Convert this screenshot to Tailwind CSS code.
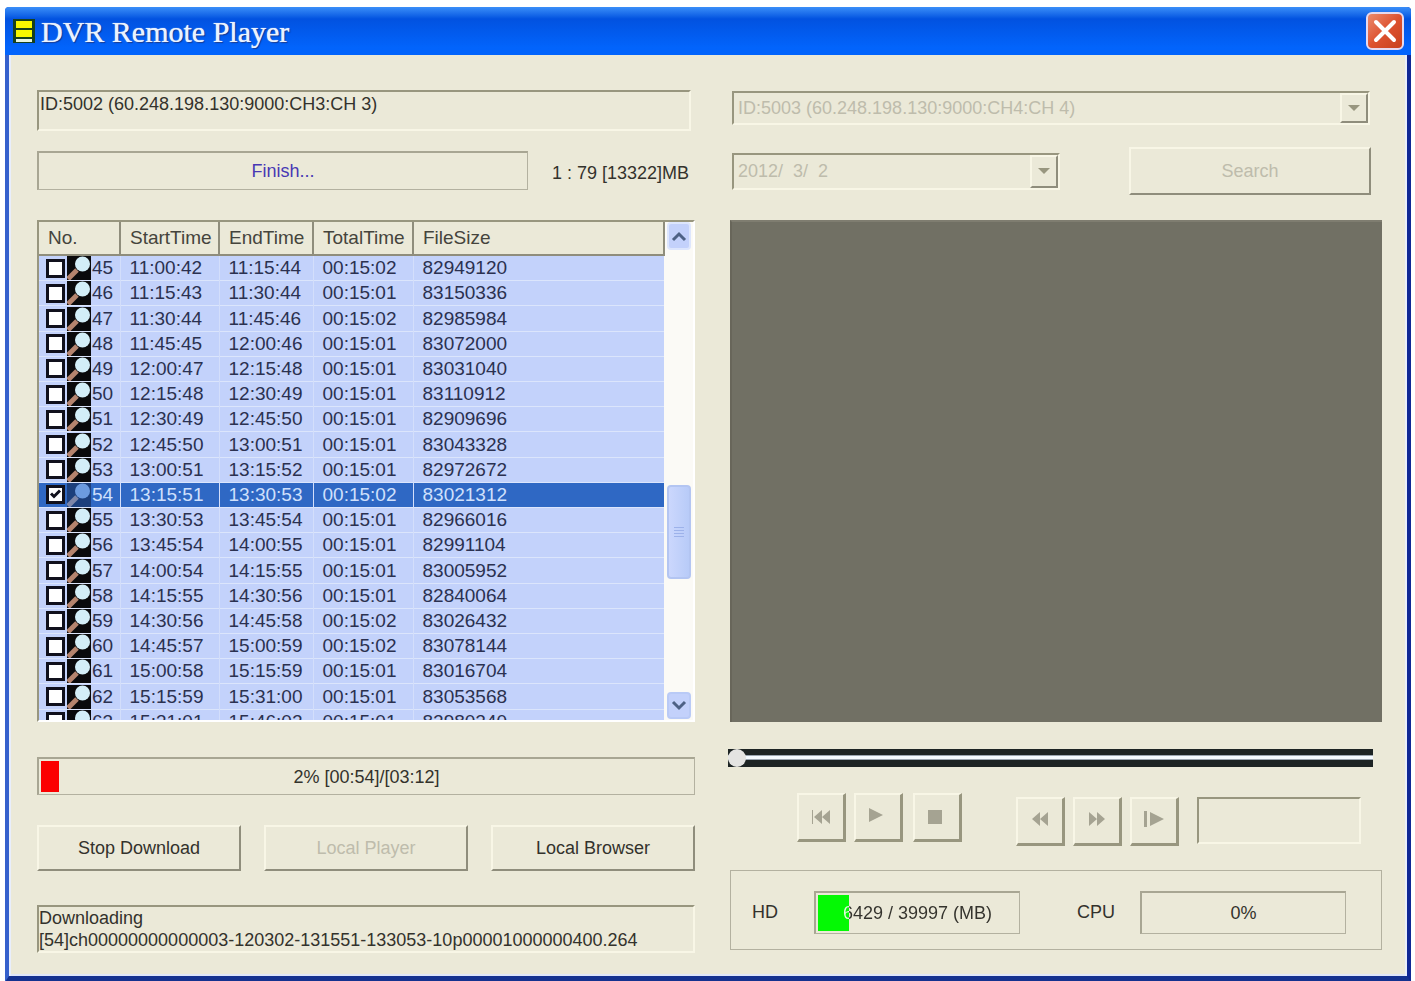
<!DOCTYPE html>
<html lang="en">
<head>
    <meta charset="UTF-8">
    <meta name="viewport" content="width=device-width, initial-scale=1.0">
    <title>DVR Remote Player</title>
    <script src="https://cdn.jsdelivr.net/npm/@tailwindcss/browser@4"></script>
</head>
<body class="min-h-screen bg-white pt-[7px] pl-[5px] pr-1 font-['Liberation_Sans',Arial,sans-serif] text-[18px] leading-[22px] text-[#33322c]">

    <div class="bg-[#ebe9d8] border-x-4 border-b-6 border-t-0 border-l-[#3560cc] border-r-[#0f2795] border-b-[#14318f] rounded-t-sm">
        <!-- Title bar -->
        <header class="-mx-1 h-12 pl-2 pr-[7px] flex items-center rounded-t-sm bg-linear-to-b from-[#3a8ef8] from-0% via-[#0252e0] via-25% to-[#0264fc] to-85%">
            <svg class="w-[22px] h-6 shrink-0" viewBox="0 0 22 24" aria-hidden="true">
                <rect width="22" height="24" fill="#16401c"/>
                <rect x="3" y="2" width="16" height="7" fill="#f8f800"/>
                <rect x="3" y="11" width="16" height="7" fill="#f8f800"/>
                <rect x="3" y="20" width="16" height="3" fill="#e8f4e0"/>
            </svg>
            <h1 class="ml-1.5 pt-0.5 flex-1 font-['Liberation_Serif',serif] text-[30px] leading-9 text-[#eaf3ff] [text-shadow:0_0_1px_#eaf3ff,1px_1px_1px_#0a2a80]">DVR Remote Player</h1>
            <button type="button" aria-label="Close" class="w-[38px] h-[38px] rounded-md border-2 border-[#e6d9ee] bg-linear-to-br from-[#ea8a6c] via-[#dd5230] to-[#c8401c] flex items-center justify-center">
                <svg class="w-6 h-6" viewBox="0 0 24 24" fill="none" stroke="#fff" stroke-width="4" stroke-linecap="round">
                    <path d="M3 3L21 21M21 3L3 21"/>
                </svg>
            </button>
        </header>

        <main class="pl-7 pr-[25px] pt-[35px] pb-[23px] grid grid-cols-[658fr_652fr] gap-[35px] shadow-[inset_2px_0_0_#e8eefc,inset_-2px_0_0_#e8eefc,inset_0_-2px_0_#dfe6fa]">

            <!-- Download side -->
            <section>
                <div class="h-[41px] mr-1 pl-px pt-px border-2 border-t-[#98967f] border-l-[#98967f] border-b-[#f8f6e6] border-r-[#f8f6e6]">ID:5002 (60.248.198.130:9000:CH3:CH 3)</div>

                <div class="mt-5 flex items-center">
                    <div class="h-[39px] w-[491px] border border-[#b3b1a0] border-t-2 border-l-2 border-t-[#a8a693] border-l-[#a8a693] flex items-center justify-center text-[#4838b4]">Finish...</div>
                    <div class="flex-1 pr-1.5 pt-1 text-right whitespace-nowrap">1 : 79 [13322]MB</div>
                </div>

                <!-- File list -->
                <div class="mt-[30px] h-[502px] flex overflow-hidden border-2 border-t-[#98967f] border-l-[#98967f] border-b-white border-r-white bg-[#fbfaf6]">
                    <div class="flex-1 h-full overflow-hidden">
                        <table class="w-full h-[513px] table-fixed border-collapse text-[19px] leading-[22px] text-[#2b3150]">
                            <thead>
                                <tr class="h-[33px] bg-[#ebe9d8] border-b-2 border-[#8f8d7c] text-[#45443c] text-left">
                                    <th class="w-[81px] py-0 pl-[9px] font-normal border-r-2 border-[#8f8d7c]">No.</th>
                                    <th class="w-[99px] py-0 pl-[9px] font-normal border-r-2 border-[#8f8d7c]">StartTime</th>
                                    <th class="w-[94px] py-0 pl-[9px] font-normal border-r-2 border-[#8f8d7c]">EndTime</th>
                                    <th class="w-[100px] py-0 pl-[9px] font-normal border-r-2 border-[#8f8d7c]">TotalTime</th>
                                    <th class="py-0 pl-[9px] font-normal border-r-2 border-[#8f8d7c]">FileSize</th>
                                </tr>
                            </thead>
                            <tbody id="files"></tbody>
                        </table>
                    </div>
                    <!-- Scrollbar -->
                    <div class="w-7 px-0.5 pb-px flex flex-col bg-[#fbfaf6]">
                        <button type="button" aria-label="Scroll up" class="h-[28px] rounded-sm border-2 border-[#dde6fd] bg-[#c3d1fb] flex items-center justify-center">
                            <svg class="w-4 h-3" viewBox="0 0 16 12" fill="none" stroke="#4d6185" stroke-width="3"><path d="M2 10L8 4L14 10"/></svg>
                        </button>
                        <div class="mt-[235px] h-[94px] rounded-sm border-2 border-[#b3c5f2] bg-linear-to-r from-[#cbd7fd] to-[#b8cbf8] flex items-center justify-center">
                            <svg class="w-2.5 h-3" viewBox="0 0 10 12" stroke="#9db2ea" stroke-width="1"><path d="M0 1.5H10M0 4.5H10M0 7.5H10M0 10.5H10"/></svg>
                        </div>
                        <button type="button" aria-label="Scroll down" class="mt-auto h-[27px] rounded-sm border-2 border-[#b9caf6] bg-[#c3d1fb] flex items-center justify-center">
                            <svg class="w-4 h-3" viewBox="0 0 16 12" fill="none" stroke="#4d6185" stroke-width="3"><path d="M2 2L8 8L14 2"/></svg>
                        </button>
                    </div>
                </div>

                <!-- Progress -->
                <div class="mt-[35px] h-[38px] relative border border-[#b3b1a0] border-t-2 border-l-2 border-t-[#a8a693] border-l-[#a8a693] flex items-center justify-center">
                    <div class="absolute left-0.5 inset-y-0.5 bg-[#fb0000]" style="width: 18px"></div>
                    <span>2% [00:54]/[03:12]</span>
                </div>

                <div class="mt-[30px] flex justify-between">
                    <button type="button" class="w-[204px] h-[46px] border-2 border-t-[#f8f6e6] border-l-[#f8f6e6] border-b-[#8f8d7c] border-r-[#8f8d7c]">Stop Download</button>
                    <button type="button" disabled class="w-[204px] h-[46px] border-2 border-t-[#f8f6e6] border-l-[#f8f6e6] border-b-[#8f8d7c] border-r-[#8f8d7c] text-[#bebcac]">Local Player</button>
                    <button type="button" class="w-[204px] h-[46px] border-2 border-t-[#f8f6e6] border-l-[#f8f6e6] border-b-[#8f8d7c] border-r-[#8f8d7c]">Local Browser</button>
                </div>

                <div class="mt-[34px] h-[48px] whitespace-nowrap border-2 border-t-[#98967f] border-l-[#98967f] border-b-[#f8f6e6] border-r-[#f8f6e6]">Downloading<br>[54]ch00000000000003-120302-131551-133053-10p00001000000400.264</div>
            </section>

            <!-- Playback side -->
            <section>
                <div class="mt-px ml-0.5 mr-3 h-[34px] relative border-2 border-t-[#98967f] border-l-[#98967f] border-b-[#f8f6e6] border-r-[#f8f6e6]">
                    <select disabled aria-label="Channel" class="block w-full h-full appearance-none pl-1 opacity-100 text-[#bebcac]">
                        <option>ID:5003 (60.248.198.130:9000:CH4:CH 4)</option>
                    </select>
                    <span class="absolute right-0 inset-y-0 w-7 border-2 border-t-[#f8f6e6] border-l-[#f8f6e6] border-b-[#8f8d7c] border-r-[#8f8d7c] bg-[#ebe9d8] flex items-center justify-center pointer-events-none">
                        <svg class="w-3 h-1.5" viewBox="0 0 12 6" fill="#98967f"><path d="M0 0H12L6 6Z"/></svg>
                    </span>
                </div>

                <div class="mt-[22px] ml-0.5 mr-[11px] flex items-center justify-between">
                    <div class="w-[328px] h-[37px] relative border-2 border-t-[#98967f] border-l-[#98967f] border-b-[#f8f6e6] border-r-[#f8f6e6]">
                        <select disabled aria-label="Date" class="block w-full h-full appearance-none pl-1 opacity-100 text-[#bebcac]">
                            <option>2012/&nbsp; 3/&nbsp; 2</option>
                        </select>
                        <span class="absolute right-0 inset-y-0 w-7 border-2 border-t-[#f8f6e6] border-l-[#f8f6e6] border-b-[#8f8d7c] border-r-[#8f8d7c] bg-[#ebe9d8] flex items-center justify-center pointer-events-none">
                            <svg class="w-3 h-1.5" viewBox="0 0 12 6" fill="#98967f"><path d="M0 0H12L6 6Z"/></svg>
                        </span>
                    </div>
                    <button type="button" disabled class="w-[242px] h-12 border-2 border-t-[#f8f6e6] border-l-[#f8f6e6] border-b-[#8f8d7c] border-r-[#8f8d7c] text-[#bebcac]">Search</button>
                </div>

                <!-- Video -->
                <div class="mt-[25px] h-[502px] bg-[#717064] border-t-2 border-l-2 border-t-[#7f7d70] border-l-[#68665a]"></div>

                <div class="mt-[27px] -ml-0.5 mr-[9px]">
                    <input type="range" min="0" max="100" value="0" aria-label="Position" class="block w-full h-[18px] appearance-none bg-[linear-gradient(#1d2424_6px,#9aa5b0_6px,#9aa5b0_7px,#f4faff_7px,#f4faff_10px,#9aa5b0_10px,#9aa5b0_11px,#1d2424_11px)] [&::-webkit-slider-thumb]:appearance-none [&::-webkit-slider-thumb]:w-[18px] [&::-webkit-slider-thumb]:h-[18px] [&::-webkit-slider-thumb]:rounded-full [&::-webkit-slider-thumb]:bg-[#e4e4e2]">
                </div>

                <!-- Player controls -->
                <div class="mt-[26px] ml-[67px] mr-[21px] flex text-[#a5a392]">
                    <div class="flex gap-2">
                        <button type="button" disabled aria-label="Previous" class="w-[49px] h-[49px] border-2 border-b-3 border-r-3 border-t-[#f8f6e6] border-l-[#f8f6e6] border-b-[#98967f] border-r-[#98967f] flex items-center justify-center">
                            <svg class="w-[18px] h-[14px]" viewBox="0 0 18 14" fill="currentColor"><path d="M0 0H1V14H0ZM10 0V14L2 7ZM18 0V14L10 7Z"/></svg>
                        </button>
                        <button type="button" disabled aria-label="Play" class="w-[49px] h-[49px] pb-1 pr-1 border-2 border-b-3 border-r-3 border-t-[#f8f6e6] border-l-[#f8f6e6] border-b-[#98967f] border-r-[#98967f] flex items-center justify-center">
                            <svg class="w-[14px] h-[14px]" viewBox="0 0 14 14" fill="currentColor"><path d="M0 0L14 7L0 14Z"/></svg>
                        </button>
                        <button type="button" disabled aria-label="Stop" class="ml-0.5 w-[49px] h-[49px] pr-1 border-2 border-b-3 border-r-3 border-t-[#f8f6e6] border-l-[#f8f6e6] border-b-[#98967f] border-r-[#98967f] flex items-center justify-center">
                            <svg class="w-[14px] h-[14px]" viewBox="0 0 14 14" fill="currentColor"><path d="M0 0H14V14H0Z"/></svg>
                        </button>
                    </div>
                    <div class="ml-[54px] mt-1 flex flex-1 gap-2">
                        <button type="button" disabled aria-label="Rewind" class="w-[49px] h-[49px] pb-1 border-2 border-b-3 border-r-3 border-t-[#f8f6e6] border-l-[#f8f6e6] border-b-[#98967f] border-r-[#98967f] flex items-center justify-center">
                            <svg class="w-4 h-[14px]" viewBox="0 0 16 14" fill="currentColor"><path d="M8 0V14L0 7ZM16 0V14L8 7Z"/></svg>
                        </button>
                        <button type="button" disabled aria-label="Fast forward" class="w-[49px] h-[49px] pb-1 border-2 border-b-3 border-r-3 border-t-[#f8f6e6] border-l-[#f8f6e6] border-b-[#98967f] border-r-[#98967f] flex items-center justify-center">
                            <svg class="w-4 h-[14px]" viewBox="0 0 16 14" fill="currentColor"><path d="M0 0L8 7L0 14ZM8 0L16 7L8 14Z"/></svg>
                        </button>
                        <button type="button" disabled aria-label="Step" class="w-[49px] h-[49px] pb-1 border-2 border-b-3 border-r-3 border-t-[#f8f6e6] border-l-[#f8f6e6] border-b-[#98967f] border-r-[#98967f] flex items-center justify-center">
                            <svg class="w-5 h-[18px]" viewBox="0 0 20 18" fill="currentColor"><path d="M0 1H3V17H0ZM6 2L20 9L6 16Z"/></svg>
                        </button>
                        <div class="ml-2.5 flex-1 h-[47px] border-2 border-t-[#98967f] border-l-[#98967f] border-b-[#f8f6e6] border-r-[#f8f6e6]"></div>
                    </div>
                </div>

                <!-- System status -->
                <div class="mt-6 h-[80px] pt-1 pl-[21px] pr-[35px] flex items-center border border-[#b3b1a0]">
                    <span class="w-[62px]">HD</span>
                    <div class="w-[206px] h-[43px] relative border border-[#b3b1a0] border-t-2 border-l-2 border-t-[#a8a693] border-l-[#a8a693]">
                        <div class="absolute left-0.5 inset-y-0.5 bg-[#04f904]" style="width: 31px"></div>
                        <div class="relative h-full flex items-center justify-center bg-clip-text text-transparent" style="background-image: linear-gradient(90deg, #e4fbe0 33px, #33322c 33px)">6429 / 39997 (MB)</div>
                    </div>
                    <span class="ml-[57px] w-[63px]">CPU</span>
                    <div class="flex-1 h-[43px] border border-[#b3b1a0] border-t-2 border-l-2 border-t-[#a8a693] border-l-[#a8a693] flex items-center justify-center">0%</div>
                </div>
            </section>
        </main>
    </div>

    <script>
        const files = [
            [45, "11:00:42", "11:15:44", "00:15:02", "82949120"],
            [46, "11:15:43", "11:30:44", "00:15:01", "83150336"],
            [47, "11:30:44", "11:45:46", "00:15:02", "82985984"],
            [48, "11:45:45", "12:00:46", "00:15:01", "83072000"],
            [49, "12:00:47", "12:15:48", "00:15:01", "83031040"],
            [50, "12:15:48", "12:30:49", "00:15:01", "83110912"],
            [51, "12:30:49", "12:45:50", "00:15:01", "82909696"],
            [52, "12:45:50", "13:00:51", "00:15:01", "83043328"],
            [53, "13:00:51", "13:15:52", "00:15:01", "82972672"],
            [54, "13:15:51", "13:30:53", "00:15:02", "83021312"],
            [55, "13:30:53", "13:45:54", "00:15:01", "82966016"],
            [56, "13:45:54", "14:00:55", "00:15:01", "82991104"],
            [57, "14:00:54", "14:15:55", "00:15:01", "83005952"],
            [58, "14:15:55", "14:30:56", "00:15:01", "82840064"],
            [59, "14:30:56", "14:45:58", "00:15:02", "83026432"],
            [60, "14:45:57", "15:00:59", "00:15:02", "83078144"],
            [61, "15:00:58", "15:15:59", "00:15:01", "83016704"],
            [62, "15:15:59", "15:31:00", "00:15:01", "83053568"],
            [63, "15:31:01", "15:46:02", "00:15:01", "82980240"]
        ];
        const selected = 54;

        document.getElementById("files").innerHTML = files.map(function([no, start, end, total, size]) {
            const on = no === selected;
            const row = on ? "bg-[#2f68c4] text-[#cfe0fc]" : "bg-[#c3d2fb]";
            const tile = on ? "#1c3f7c" : "#0a0a0c";
            const lens = on ? "#6c9be0" : "#d3eef8";
            const handle = on ? "#7d86a8" : "#b5846e";
            return `
                <tr class="${row} border-b border-[#dbe5fc]">
                    <td class="p-0 border-r border-[#d3defb]">
                        <div class="flex items-center pl-[7px]">
                            <span class="relative w-[19px] h-[19px]">
                                <input type="checkbox" aria-label="File ${no}" ${on ? "checked" : ""} class="block w-[19px] h-[19px] appearance-none border-3 border-[#10101c] bg-white">
                                ${on ? '<svg class="absolute inset-0 w-[19px] h-[19px] pointer-events-none" viewBox="0 0 19 19" fill="none" stroke="#10101c" stroke-width="3"><path d="M5 8.500L8 11.500L14 5.500"/></svg>' : ""}
                            </span>
                            <svg class="ml-0.5 w-6 h-6 shrink-0" viewBox="0 0 24 24">
                                <rect width="24" height="24" fill="${tile}"/>
                                <path d="M1 23L10 14" stroke="${handle}" stroke-width="5"/>
                                <circle cx="15.500" cy="8" r="7.500" fill="${lens}"/>
                            </svg>
                            <span class="ml-px">${no}</span>
                        </div>
                    </td>
                    <td class="py-0 pl-[9px] border-r border-[#d3defb]">${start}</td>
                    <td class="py-0 pl-[9px] border-r border-[#d3defb]">${end}</td>
                    <td class="py-0 pl-[9px] border-r border-[#d3defb]">${total}</td>
                    <td class="py-0 pl-[9px]">${size}</td>
                </tr>`;
        }).join("");
    </script>

</body>
</html>
